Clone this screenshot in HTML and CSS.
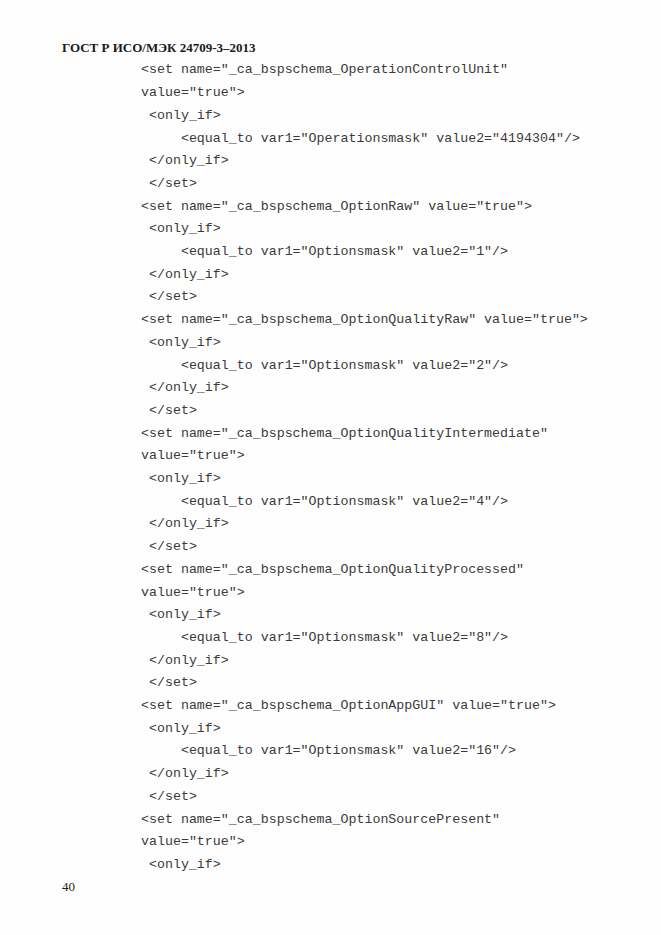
FILE: index.html
```html
<!DOCTYPE html>
<html lang="ru">
<head>
<meta charset="utf-8">
<link rel="stylesheet" href="styles.css">
</head>
<body>
<div class="page">
<div class="header">ГОСТ Р ИСО/МЭК 24709-3–2013</div>
<pre class="code">&lt;set name="_ca_bspschema_OperationControlUnit"
value="true"&gt;
 &lt;only_if&gt;
     &lt;equal_to var1="Operationsmask" value2="4194304"/&gt;
 &lt;/only_if&gt;
 &lt;/set&gt;
&lt;set name="_ca_bspschema_OptionRaw" value="true"&gt;
 &lt;only_if&gt;
     &lt;equal_to var1="Optionsmask" value2="1"/&gt;
 &lt;/only_if&gt;
 &lt;/set&gt;
&lt;set name="_ca_bspschema_OptionQualityRaw" value="true"&gt;
 &lt;only_if&gt;
     &lt;equal_to var1="Optionsmask" value2="2"/&gt;
 &lt;/only_if&gt;
 &lt;/set&gt;
&lt;set name="_ca_bspschema_OptionQualityIntermediate"
value="true"&gt;
 &lt;only_if&gt;
     &lt;equal_to var1="Optionsmask" value2="4"/&gt;
 &lt;/only_if&gt;
 &lt;/set&gt;
&lt;set name="_ca_bspschema_OptionQualityProcessed"
value="true"&gt;
 &lt;only_if&gt;
     &lt;equal_to var1="Optionsmask" value2="8"/&gt;
 &lt;/only_if&gt;
 &lt;/set&gt;
&lt;set name="_ca_bspschema_OptionAppGUI" value="true"&gt;
 &lt;only_if&gt;
     &lt;equal_to var1="Optionsmask" value2="16"/&gt;
 &lt;/only_if&gt;
 &lt;/set&gt;
&lt;set name="_ca_bspschema_OptionSourcePresent"
value="true"&gt;
 &lt;only_if&gt;</pre>
<div class="page-number">40</div>
</div>
</body>
</html>
```
FILE: styles.css
```css
html, body {
  margin: 0;
  padding: 0;
  background: #fefefe;
}
.page {
  width: 661px;
  height: 935px;
  padding: 40px 0 0 62px;
  box-sizing: border-box;
  color: #1a1a1a;
}
.header {
  font-family: "Liberation Serif", serif;
  font-weight: bold;
  font-size: 13px;
  line-height: 16px;
  height: 16px;
}
.code {
  margin: 3.4px 0 0 79px;
  font-family: "Liberation Mono", monospace;
  font-size: 13.3px;
  line-height: 22.71px;
  color: #3a3a3a;
  white-space: pre;
}
.page-number {
  margin-top: 2px;
  font-family: "Liberation Serif", serif;
  font-size: 13px;
  line-height: 16px;
}
```
